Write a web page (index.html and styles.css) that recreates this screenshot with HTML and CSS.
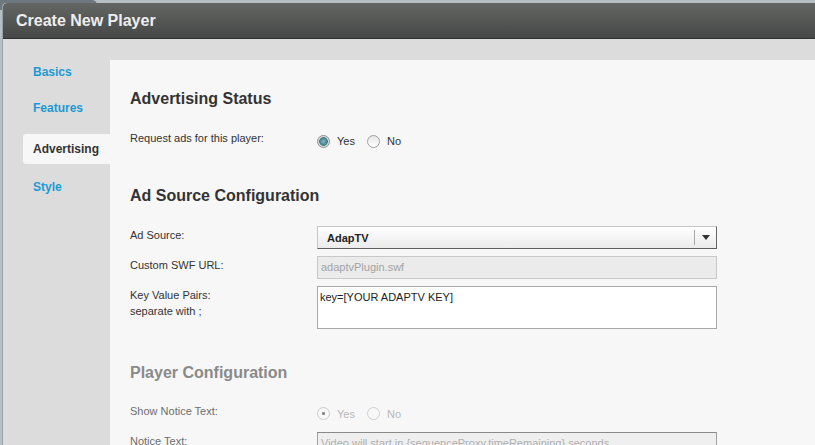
FILE: index.html
```html
<!DOCTYPE html>
<html>
<head>
<meta charset="utf-8">
<link rel="stylesheet" href="styles.css">
</head>
<body>
<div class="backtab"></div>
<div class="window">
  <div class="titlebar">Create New Player</div>
  <div class="main">
    <nav class="sidebar">
      <a class="nav-item">Basics</a>
      <a class="nav-item">Features</a>
      <a class="nav-item active">Advertising</a>
      <a class="nav-item style">Style</a>
    </nav>
    <div class="content">
      <section class="section">
        <h2 class="heading">Advertising Status</h2>
        <div class="row">
          <div class="label">Request ads for this player:</div>
          <div class="radios">
            <span class="radio checked"></span><span class="opt">Yes</span>
            <span class="radio"></span><span class="opt">No</span>
          </div>
        </div>
      </section>
      <section class="section">
        <h2 class="heading">Ad Source Configuration</h2>
        <div class="row">
          <div class="label">Ad Source:</div>
          <div class="select">
            <span class="select-text">AdapTV</span>
            <span class="select-btn"><span class="arrow"></span></span>
          </div>
        </div>
        <div class="row">
          <div class="label">Custom SWF URL:</div>
          <div class="input disabled">adaptvPlugin.swf</div>
        </div>
        <div class="row">
          <div class="label">Key Value Pairs:<br>separate with ;</div>
          <div class="textarea">key=[YOUR ADAPTV KEY]</div>
        </div>
      </section>
      <section class="section off">
        <h2 class="heading">Player Configuration</h2>
        <div class="row">
          <div class="label">Show Notice Text:</div>
          <div class="radios">
            <span class="radio dis-checked"></span><span class="opt">Yes</span>
            <span class="radio dis"></span><span class="opt">No</span>
          </div>
        </div>
        <div class="row">
          <div class="label">Notice Text:</div>
          <div class="input notice">Video will start in {sequenceProxy.timeRemaining} seconds</div>
        </div>
      </section>
    </div>
  </div>
</div>
</body>
</html>
```

FILE: styles.css
```css
html, body {
  margin: 0;
  padding: 0;
  height: 445px;
  overflow: hidden;
}
body {
  background: #b5c0c5;
  font-family: "Liberation Sans", Arial, sans-serif;
  position: relative;
}
.backtab {
  position: absolute;
  left: 0;
  top: 0;
  width: 97px;
  height: 10px;
  background: #6c787e;
  border-radius: 0 5px 0 0;
}
.window {
  position: relative;
  margin: 3px 0 0 3px;
  height: 442px;
  background: #dcdcdc;
  box-shadow: -1px 0 0 #97a2a7;
  border-radius: 4px 0 0 0;
  overflow: hidden;
}
.titlebar {
  height: 35px;
  line-height: 35px;
  padding-left: 13px;
  background: linear-gradient(#646664, #464847);
  border-bottom: 1px solid #2e2f2f;
  color: #eeeeee;
  font-size: 16px;
  font-weight: bold;
  border-radius: 4px 0 0 0;
}
.main {
  display: flex;
  height: 406px;
}
.sidebar {
  width: 107px;
  flex: none;
  padding-top: 18px;
  display: flex;
  flex-direction: column;
  gap: 6px;
}
.nav-item {
  display: block;
  height: 30px;
  line-height: 31px;
  margin-left: 20px;
  padding-left: 10px;
  font-size: 12px;
  font-weight: bold;
  color: #1b9ad6;
}
.nav-item:first-child {
  line-height: 30px;
}
.nav-item.active {
  margin-top: 5px;
  line-height: 30px;
  background: #f7f7f7;
  color: #333333;
  border-radius: 3px 0 0 3px;
}
.nav-item.style {
  margin-top: 2px;
}
.content {
  flex: 1;
  margin-top: 21px;
  background: #f7f7f7;
  padding: 29px 0 0 20px;
}
.section + .section {
  margin-top: 34px;
}
.heading {
  margin: 0 0 20px 0;
  font-size: 16px;
  font-weight: bold;
  line-height: 20px;
  color: #333333;
}
.row {
  display: grid;
  grid-template-columns: 187px 400px;
  min-height: 23px;
  margin-bottom: 7px;
}
.label {
  font-size: 11px;
  line-height: 16px;
  padding-top: 1px;
  color: #333333;
}
.radios {
  display: flex;
  align-items: center;
  height: 23px;
  box-sizing: border-box;
  padding-top: 1px;
  font-size: 11px;
  color: #333333;
}
.opt {
  margin: 0 12px 0 7px;
}
.radio {
  width: 11px;
  height: 11px;
  border-radius: 50%;
  border: 1px solid #a0a0a0;
  background: linear-gradient(#e6e6e6, #ffffff);
  box-sizing: content-box;
}
.radio.checked {
  border-color: #8c8c8c;
  background: radial-gradient(circle, #7fb3bd 0, #4f8f9b 3px, #3b727c 4px, #dcdcdc 4.6px, #f2f2f2 100%);
}
.radio.dis {
  border-color: #d0d0d0;
  background: #f8f8f8;
}
.radio.dis-checked {
  border-color: #cccccc;
  background: radial-gradient(circle, #8a8a8a 0, #8a8a8a 1.3px, #f8f8f8 1.8px, #f8f8f8 100%);
}
.select {
  position: relative;
  height: 23px;
  box-sizing: border-box;
  border: 1px solid #c6c6c6;
  border-right-color: #666666;
  border-bottom-color: #5e5e5e;
  background: linear-gradient(#ffffff, #ebebeb);
  display: flex;
  align-items: center;
}
.select-text {
  flex: 1;
  padding-left: 9px;
  font-size: 11px;
  font-weight: bold;
  color: #222222;
}
.select-btn {
  width: 21px;
  height: 15px;
  border-left: 1px solid #a8a8a8;
  display: flex;
  align-items: center;
  justify-content: center;
}
.arrow {
  width: 0;
  height: 0;
  border-left: 4px solid transparent;
  border-right: 4px solid transparent;
  border-top: 5px solid #333333;
}
.input {
  height: 23px;
  box-sizing: border-box;
  padding: 0 3px;
  line-height: 21px;
  font-size: 11px;
  border: 1px solid #c8c8c8;
  background: #ebebeb;
  color: #a3a3a3;
  white-space: nowrap;
  overflow: hidden;
}
.textarea {
  height: 43px;
  box-sizing: border-box;
  border: 1px solid #a8a8a8;
  background: #ffffff;
  font-size: 11px;
  line-height: 14px;
  padding: 3px 2px;
  color: #222222;
}
.section.off .heading {
  color: #8a8a8a;
  margin-bottom: 19px;
}
.section.off .label {
  color: #6e6e6e;
}
.section.off .radios {
  color: #b8b8b8;
  padding-top: 0;
}
.input.notice {
  border-color: #a0a0a0;
  border-top-color: #8a8a8a;
  background: #efefef;
  color: #b0b0b0;
}
```
